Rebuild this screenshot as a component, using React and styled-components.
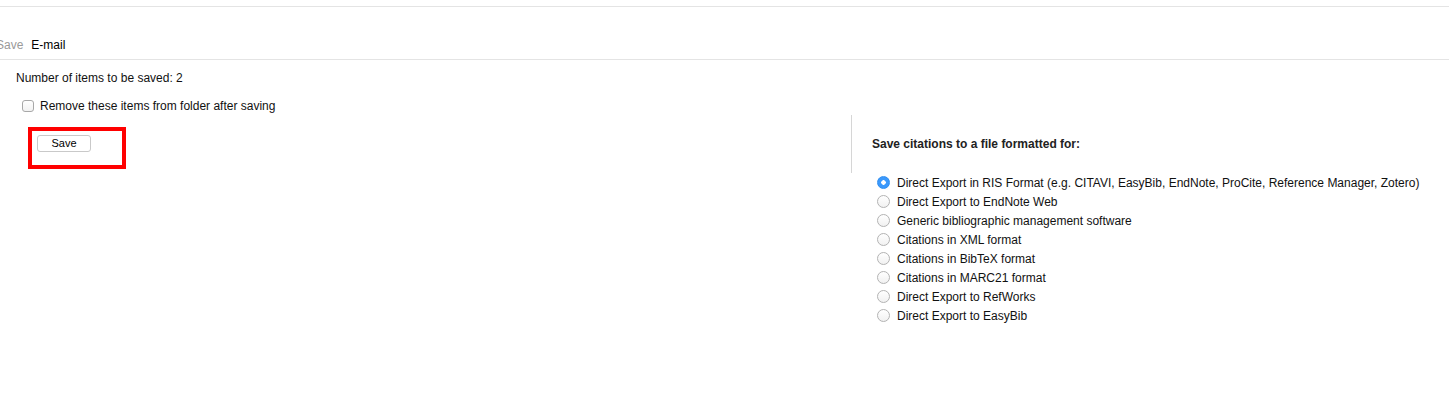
import React, { useState } from 'react';
import styled, { createGlobalStyle } from 'styled-components';

const GlobalStyle = createGlobalStyle`
  body {
    margin: 0;
    background: #fff;
    font-family: "Liberation Sans", Arial, Helvetica, sans-serif;
    font-size: 12px;
    color: #222;
    overflow: hidden;
  }
`;

const Page = styled.div`
  width: 1449px;
  height: 404px;
  background: #fff;
`;

const TopBar = styled.div`
  height: 6px;
  border-bottom: 1px solid #e4e4e4;
`;

const Tabs = styled.div`
  display: flex;
  align-items: flex-end;
  gap: 8px;
  height: 45px;
  padding-bottom: 7px;
  margin-left: -4px;
  border-bottom: 1px solid #e4e4e4;
`;

const Tab = styled.span`
  line-height: 14px;
  color: ${(p) => (p.active ? '#000' : '#9a9a9a')};
`;

const Content = styled.div`
  padding: 11px 16px 0;
`;

const Line = styled.div`
  line-height: 14px;
  color: #111;
`;

const CheckRow = styled.label`
  display: flex;
  align-items: center;
  gap: 6px;
  margin-top: 14px;
  margin-left: 6px;
  line-height: 14px;
  color: #111;
`;

const Box = styled.input`
  appearance: none;
  width: 12px;
  height: 12px;
  margin: 0;
  border: 1px solid #a8a8a8;
  border-radius: 3px;
  background: linear-gradient(#fff, #f2f2f2);
`;

const Columns = styled.div`
  display: flex;
  margin-top: 2px;
`;

const LeftCol = styled.div`
  width: 835px;
  flex-shrink: 0;
`;

const Highlight = styled.div`
  box-sizing: border-box;
  width: 98px;
  height: 42px;
  margin: 12px 0 0 12px;
  border: 4px solid #ff0000;
  padding: 4px 0 0 5px;
`;

const SaveButton = styled.button`
  display: block;
  width: 54px;
  height: 17px;
  padding: 0;
  border: 1px solid #c9c9c9;
  border-radius: 3px;
  background: #fff;
  font-family: inherit;
  font-size: 11px;
  line-height: 15px;
  color: #000;
`;

const RightCol = styled.div`
  flex: 1;
`;

const HeadBlock = styled.div`
  height: 58px;
  border-left: 1px solid #d6d6d6;
  display: flex;
  align-items: center;
  padding-left: 20px;
`;

const Heading = styled.div`
  font-weight: bold;
  line-height: 14px;
  color: #222;
`;

const Options = styled.div`
  display: flex;
  flex-direction: column;
  padding-left: 26px;
`;

const Option = styled.label`
  display: flex;
  align-items: center;
  gap: 7px;
  height: 19px;
  color: #111;
`;

const Radio = styled.input`
  appearance: none;
  width: 13px;
  height: 13px;
  margin: 0;
  border-radius: 50%;
  border: 1px solid #b3b3b3;
  background: linear-gradient(#fff, #f1f1f1);
  &:checked {
    border-color: #2f8ef0;
    background: radial-gradient(circle, #fff 0 2px, #3b99fc 2.5px);
  }
`;

const formats = [
  'Direct Export in RIS Format (e.g. CITAVI, EasyBib, EndNote, ProCite, Reference Manager, Zotero)',
  'Direct Export to EndNote Web',
  'Generic bibliographic management software',
  'Citations in XML format',
  'Citations in BibTeX format',
  'Citations in MARC21 format',
  'Direct Export to RefWorks',
  'Direct Export to EasyBib',
];

const App = () => {
  const [format, setFormat] = useState(0);
  const [remove, setRemove] = useState(false);

  return (
    <Page>
      <GlobalStyle />
      <TopBar />
      <Tabs>
        <Tab>Save</Tab>
        <Tab active>E-mail</Tab>
      </Tabs>
      <Content>
        <Line>Number of items to be saved: 2</Line>
        <CheckRow>
          <Box type="checkbox" checked={remove} onChange={(e) => setRemove(e.target.checked)} />
          Remove these items from folder after saving
        </CheckRow>
        <Columns>
          <LeftCol>
            <Highlight>
              <SaveButton type="button">Save</SaveButton>
            </Highlight>
          </LeftCol>
          <RightCol>
            <HeadBlock>
              <Heading>Save citations to a file formatted for:</Heading>
            </HeadBlock>
            <Options>
              {formats.map((f, i) => (
                <Option key={f}>
                  <Radio
                    type="radio"
                    name="format"
                    checked={format === i}
                    onChange={() => setFormat(i)}
                  />
                  {f}
                </Option>
              ))}
            </Options>
          </RightCol>
        </Columns>
      </Content>
    </Page>
  );
};

export default App;
